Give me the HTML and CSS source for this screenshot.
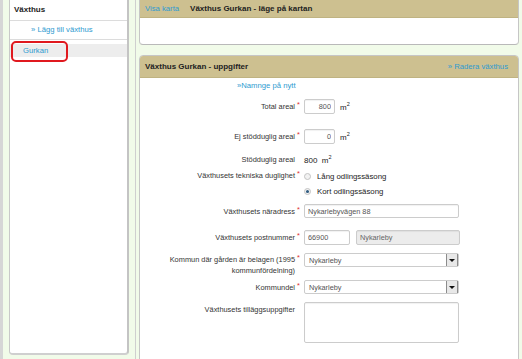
FILE: index.html
```html
<!DOCTYPE html>
<html lang="sv">
<head>
  <meta charset="UTF-8">
  <meta name="viewport" content="width=device-width, initial-scale=1.0">
  <link rel="stylesheet" href="styles.css">
</head>
<body>
  <div class="page">
    <div class="sidebar">
      <div class="side-title">Växthus</div>
      <div class="side-add"><a href="#">» Lägg till växthus</a></div>
      <div class="side-item selected"><a href="#">Gurkan</a></div>
    </div>

    <div class="main">
      <div class="panel map-panel">
        <div class="panel-head">
          <a href="#" class="head-link">Visa karta</a>
          <span class="head-title">Växthus Gurkan - läge på kartan</span>
        </div>
        <div class="panel-body map-body"></div>
      </div>

      <div class="panel info-panel">
        <div class="panel-head">
          <span class="head-title">Växthus Gurkan - uppgifter</span>
          <a href="#" class="head-right">» Radera växthus</a>
        </div>
        <div class="panel-body form">
          <div class="row rename"><a href="#">»Namnge på nytt</a></div>

          <div class="row r-total">
            <div class="label"><span class="text">Total areal</span><span class="star">*</span></div>
            <input type="text" class="num" value="800">
            <span class="unit">m<sup>2</sup></span>
          </div>

          <div class="row r-ej">
            <div class="label"><span class="text">Ej stödduglig areal</span><span class="star">*</span></div>
            <input type="text" class="num" value="0">
            <span class="unit">m<sup>2</sup></span>
          </div>

          <div class="row r-stod">
            <div class="label"><span class="text">Stödduglig areal</span><span class="star"></span></div>
            <span class="value">800 &nbsp;m<sup>2</sup></span>
          </div>

          <div class="row r-tek">
            <div class="label"><span class="text">Växthusets tekniska duglighet</span><span class="star">*</span></div>
            <div class="radios">
              <div class="radio"><span class="dot"></span>Lång odlingssäsong</div>
              <div class="radio"><span class="dot checked"></span>Kort odlingssäsong</div>
            </div>
          </div>

          <div class="row r-adr">
            <div class="label"><span class="text">Växthusets näradress</span><span class="star">*</span></div>
            <input type="text" class="wide" value="Nykarlebyvägen 88">
          </div>

          <div class="row r-post">
            <div class="label"><span class="text">Växthusets postnummer</span><span class="star">*</span></div>
            <input type="text" class="zip" value="66900">
            <input type="text" class="city" value="Nykarleby" disabled>
          </div>

          <div class="row r-kommun">
            <div class="label"><span class="text">Kommun där gården är belagen (1995 kommunfördelning)</span><span class="star">*</span></div>
            <div class="select"><span>Nykarleby</span><span class="arrow"></span></div>
          </div>

          <div class="row r-del">
            <div class="label"><span class="text">Kommundel</span><span class="star">*</span></div>
            <div class="select"><span>Nykarleby</span><span class="arrow"></span></div>
          </div>

          <div class="row r-extra">
            <div class="label"><span class="text">Växthusets tilläggsuppgifter</span><span class="star"></span></div>
            <textarea></textarea>
          </div>
        </div>
      </div>
    </div>
  </div>
</body>
</html>
```

FILE: styles.css
```css
body {
  margin: 0;
  background-color: #f1fbe9;
  font-family: "Liberation Sans", Arial, sans-serif;
  font-size: 7.7px;
  color: #222;
  height: 359px;
  overflow: hidden;
}

a {
  color: #2e9bd0;
  text-decoration: none;
}

.page {
  display: flex;
  height: 359px;
  border-left: 3px solid #d6d6d6;
  box-sizing: border-box;
}

/* left column */

.sidebar {
  width: 120px;
  flex: none;
  height: 359px;
  margin: -4px 0 0 6px;
  background-color: white;
  border: 1px solid #c9c9c9;
  border-right: 2px solid #c4c4c4;
  border-bottom: 2px solid #cfcfcf;
  border-radius: 4px;
  box-sizing: border-box;
  padding-top: 4px;
}

.side-title {
  font-weight: bold;
  font-size: 8px;
  height: 19px;
  line-height: 17px;
  padding-left: 4px;
  border-bottom: 1px solid #dcdcdc;
}

.side-add {
  height: 18px;
  line-height: 18px;
  padding-left: 21px;
  border-bottom: 1px solid #dcdcdc;
}

.side-item {
  margin-top: 4px;
  height: 13px;
  line-height: 13px;
  padding-left: 13px;
  position: relative;
}

.side-item.selected {
  background-color: #ededed;
}

.side-item.selected::after {
  content: "";
  position: absolute;
  left: 1px;
  top: -3px;
  width: 53px;
  height: 17px;
  border: 2px solid #e0191f;
  border-radius: 5px;
}

/* right column */

.main {
  flex: 1;
  margin-left: 6px;
  border-left: 1px solid #cfcfcf;
  padding: 0 3px 0 3px;
  min-width: 0;
}

.panel {
  background-color: white;
  border: 1px solid #c6c6c6;
  border-radius: 4px;
  overflow: hidden;
}

.map-panel {
  margin-top: -4px;
  border-bottom-color: #b9b9b9;
}

.info-panel {
  margin-top: 10px;
  height: 310px;
}

.panel-head {
  background-color: #cdc090;
  border-bottom: 1px solid #bfb382;
  height: 21px;
  line-height: 21px;
  padding: 0 10px 0 5px;
  display: flex;
  align-items: center;
}

.map-panel .panel-head {
  padding-top: 4px;
  height: 16px;
  line-height: 16px;
}

.head-link {
  margin-right: 11px;
}

.head-title {
  font-weight: bold;
  font-size: 8px;
}

.head-right {
  margin-left: auto;
}

.map-body {
  height: 26px;
}

/* form */

.form {
  padding-top: 1px;
}

.row {
  display: flex;
  align-items: center;
}

.label {
  width: 164px;
  flex: none;
  display: flex;
  justify-content: flex-end;
  color: #333;
  font-size: 7.4px;
}

.label .text {
  text-align: right;
}

.star {
  flex: none;
  width: 9px;
  padding-left: 2px;
  box-sizing: border-box;
  color: #e03030;
  position: relative;
  top: -2px;
}

.rename {
  height: 12px;
  padding-left: 97px;
}

input, textarea {
  font-family: "Liberation Sans", Arial, sans-serif;
  font-size: 7.3px;
  color: #555;
  border: 1px solid #cccccc;
  border-radius: 2px;
  box-shadow: inset 0 1px 1px rgba(0, 0, 0, 0.06);
  height: 15px;
  padding: 0 3px;
  box-sizing: border-box;
  margin: 0;
  background-color: white;
}

.num {
  width: 31px;
  text-align: right;
}

.unit {
  margin-left: 5px;
  font-size: 8px;
}

sup {
  font-size: 5.5px;
}

.r-total { margin-top: 8px; }
.r-ej { margin-top: 15px; }
.r-stod { margin-top: 9px; height: 12px; }
.r-tek { margin-top: 5px; align-items: flex-start; }
.r-tek .label { line-height: 12px; }
.r-adr { margin-top: 7px; }
.r-post { margin-top: 12px; }
.r-kommun { margin-top: 8px; align-items: flex-start; }
.r-kommun .label { line-height: 11px; margin-top: 1px; }
.r-del { margin-top: 4px; }
.r-extra { margin-top: 8px; align-items: flex-start; }
.r-extra .label { line-height: 12px; margin-top: 2px; }

.value {
  font-size: 8px;
}

.radios {
  display: flex;
  flex-direction: column;
  gap: 3px;
}

.radio {
  display: flex;
  align-items: center;
  height: 12px;
  font-size: 7.8px;
}

.dot {
  width: 7px;
  height: 7px;
  border-radius: 50%;
  border: 1px solid #c3c3c3;
  background-color: #f2f2f2;
  box-sizing: border-box;
  margin-right: 6px;
  position: relative;
}

.dot.checked::after {
  content: "";
  position: absolute;
  left: 1px;
  top: 1px;
  width: 3px;
  height: 3px;
  border-radius: 50%;
  background-color: #2f5b80;
}

.wide {
  width: 155px;
  height: 14px;
}

.zip {
  width: 46px;
  height: 15px;
}

.city {
  width: 104px;
  height: 15px;
  margin-left: 6px;
  background-color: #ececec;
  color: #666;
}

.select {
  width: 155px;
  height: 14px;
  border: 1px solid #cccccc;
  border-radius: 2px;
  box-sizing: border-box;
  display: flex;
  align-items: center;
  padding-left: 4px;
  color: #555;
  font-size: 7.3px;
}

.arrow {
  margin-left: auto;
  width: 10px;
  height: 12px;
  background-color: #e8e8e8;
  border-left: 1px solid #8c8c8c;
  border-right: 1px solid #8c8c8c;
  position: relative;
}

.arrow::after {
  content: "";
  position: absolute;
  left: 2px;
  top: 5px;
  border-left: 3px solid transparent;
  border-right: 3px solid transparent;
  border-top: 3px solid #111;
}

textarea {
  width: 155px;
  height: 41px;
  resize: none;
}
```
